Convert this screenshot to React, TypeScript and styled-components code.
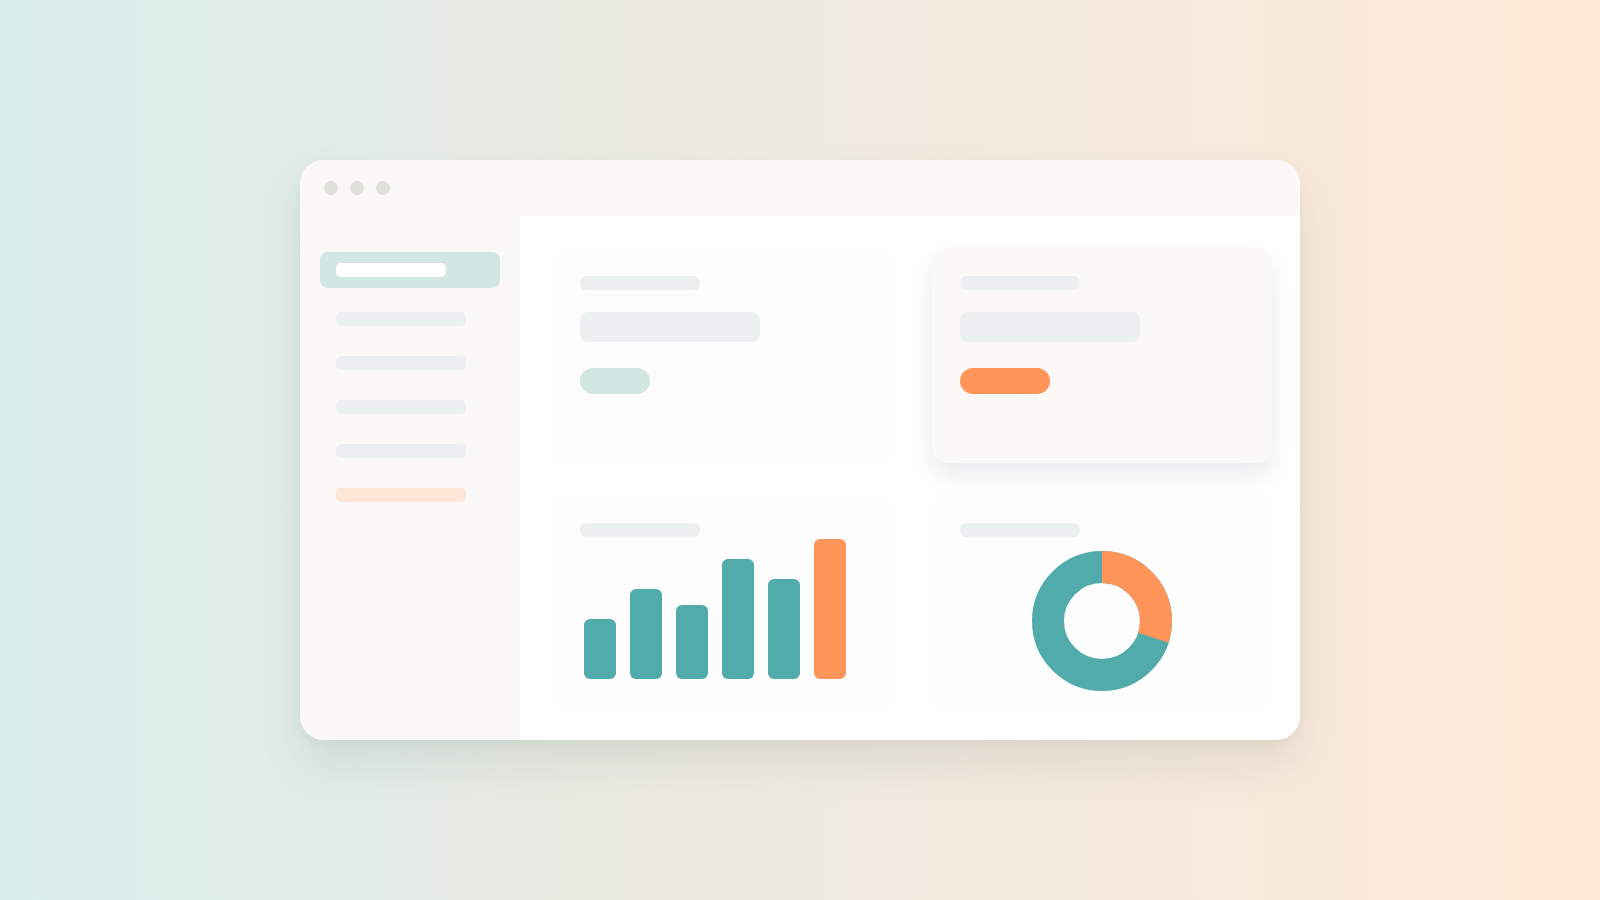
import styled, { createGlobalStyle } from 'styled-components';

const GlobalStyle = createGlobalStyle`
    html, body {
        margin: 0;
        padding: 0;
    }
    body {
        font-family: "Inter", "Liberation Sans", sans-serif;
    }
`;

type Bar = {
    height: number,
    accent?: boolean,
}

const bars: Bar[] = [
    { height: 60 },
    { height: 90 },
    { height: 74 },
    { height: 120 },
    { height: 100 },
    { height: 140, accent: true },
];

const navItems = ['plain', 'plain', 'plain', 'plain', 'warm'];

// donut geometry: ring of 32px around a 76px hole, orange slice ~30%
const RADIUS = 54;
const CIRC = 2 * Math.PI * RADIUS;
const SLICE = 0.3;

export default function App(): JSX.Element {
    return (
        <>
            <GlobalStyle />
            <Page>
                <Window>
                    <TitleBar>
                        <Dot />
                        <Dot />
                        <Dot />
                    </TitleBar>
                    <Body>
                        <Sidebar>
                            <ActiveItem>
                                <ActiveLabel />
                            </ActiveItem>
                            <NavList>
                                {navItems.map((kind, i) => (
                                    <NavBar key={i} $warm={kind === 'warm'} />
                                ))}
                            </NavList>
                        </Sidebar>
                        <Main>
                            <Card>
                                <Line />
                                <Block />
                                <Pill />
                            </Card>
                            <Card $raised>
                                <Line />
                                <Block />
                                <Pill $accent />
                            </Card>
                            <Card>
                                <Line />
                                <Chart>
                                    {bars.map((bar, i) => (
                                        <Column
                                            key={i}
                                            $accent={bar.accent}
                                            style={{ height: bar.height }}
                                        />
                                    ))}
                                </Chart>
                            </Card>
                            <Card>
                                <Line />
                                <DonutWrap>
                                    <svg width="140" height="140" viewBox="0 0 140 140">
                                        <circle
                                            cx="70"
                                            cy="70"
                                            r={RADIUS}
                                            fill="none"
                                            stroke="#50abaa"
                                            strokeWidth="32"
                                        />
                                        <circle
                                            cx="70"
                                            cy="70"
                                            r={RADIUS}
                                            fill="none"
                                            stroke="#ff9559"
                                            strokeWidth="32"
                                            strokeDasharray={`${CIRC * SLICE} ${CIRC}`}
                                            transform="rotate(-90 70 70)"
                                        />
                                    </svg>
                                </DonutWrap>
                            </Card>
                        </Main>
                    </Body>
                </Window>
            </Page>
        </>
    );
}

const Page = styled.div`
    width: 1600px;
    height: 900px;
    display: flex;
    align-items: center;
    justify-content: center;
    background: linear-gradient(90deg, #d9eeeb 0%, #e9ebe3 35%, #f3eadf 60%, #fee8d7 100%);
    overflow: hidden;
`;

const Window = styled.div`
    width: 1000px;
    height: 580px;
    border-radius: 24px;
    background: #ffffff;
    overflow: hidden;
    display: flex;
    flex-direction: column;
    box-shadow: 0 24px 44px rgba(70, 100, 90, 0.12), 0 4px 12px rgba(0, 0, 0, 0.03);
`;

const TitleBar = styled.div`
    height: 56px;
    flex-shrink: 0;
    display: flex;
    align-items: center;
    gap: 12px;
    padding-left: 24px;
    background: #faf9f7;
`;

const Dot = styled.span`
    width: 14px;
    height: 14px;
    border-radius: 50%;
    background: #dfe1da;
`;

const Body = styled.div`
    flex: 1;
    min-height: 0;
    display: flex;
`;

const Sidebar = styled.div`
    width: 220px;
    flex-shrink: 0;
    box-sizing: border-box;
    padding: 36px 20px;
    background: #faf9f7;
`;

const ActiveItem = styled.div`
    height: 36px;
    border-radius: 8px;
    background: #d2e6e2;
    display: flex;
    align-items: center;
    padding: 0 16px;
`;

const ActiveLabel = styled.span`
    width: 110px;
    height: 14px;
    border-radius: 5px;
    background: #ffffff;
`;

const NavList = styled.div`
    display: flex;
    flex-direction: column;
    gap: 30px;
    margin-top: 24px;
    padding-left: 16px;
`;

const NavBar = styled.span<{ $warm?: boolean }>`
    width: 130px;
    height: 14px;
    border-radius: 5px;
    background: ${p => (p.$warm ? '#fde6d6' : '#edf0f0')};
`;

const Main = styled.div`
    flex: 1;
    box-sizing: border-box;
    padding: 32px 28px 30px 32px;
    display: grid;
    grid-template-columns: repeat(2, minmax(0, 1fr));
    grid-template-rows: repeat(2, minmax(0, 1fr));
    column-gap: 40px;
    row-gap: 32px;
`;

const Card = styled.div<{ $raised?: boolean }>`
    box-sizing: border-box;
    min-height: 0;
    padding: 28px;
    border-radius: 16px;
    display: flex;
    flex-direction: column;
    align-items: flex-start;
    background: ${p => (p.$raised ? '#faf9f7' : '#fdfdfd')};
    box-shadow: ${p => (p.$raised
        ? '0 12px 26px rgba(80, 110, 105, 0.13)'
        : '0 2px 14px rgba(0, 0, 0, 0.015)')};
`;

const Line = styled.span`
    width: 120px;
    height: 14px;
    border-radius: 6px;
    background: #edf0f0;
    flex-shrink: 0;
`;

const Block = styled.span`
    width: 180px;
    height: 30px;
    border-radius: 8px;
    margin-top: 22px;
    flex-shrink: 0;
    background: #edf0f0;
`;

const Pill = styled.span<{ $accent?: boolean }>`
    width: ${p => (p.$accent ? 90 : 70)}px;
    height: 26px;
    border-radius: 13px;
    margin-top: 26px;
    flex-shrink: 0;
    background: ${p => (p.$accent ? '#ff9559' : '#d2e6e2')};
`;

const Chart = styled.div`
    height: 140px;
    flex-shrink: 0;
    margin-top: 2px;
    padding-left: 4px;
    display: flex;
    align-items: flex-end;
    gap: 14px;
`;

const Column = styled.span<{ $accent?: boolean }>`
    width: 32px;
    border-radius: 6px;
    background: ${p => (p.$accent ? '#ff9559' : '#50abaa')};
`;

const DonutWrap = styled.div`
    align-self: stretch;
    flex-shrink: 0;
    display: flex;
    justify-content: center;
    margin-top: 14px;

    svg {
        display: block;
    }
`;
